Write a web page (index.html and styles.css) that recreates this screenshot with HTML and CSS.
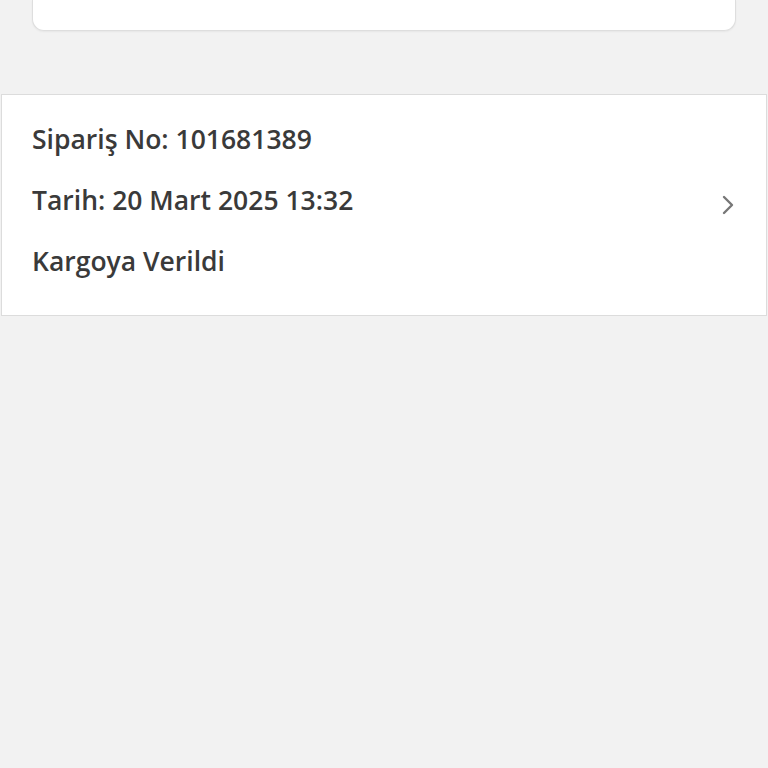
FILE: index.html
```html
<!DOCTYPE html>
<html lang="tr">
<head>
    <meta charset="UTF-8">
    <meta name="viewport" content="width=device-width, initial-scale=1.0">
    <title>Siparişlerim</title>
    <link rel="stylesheet" href="styles.css">
</head>
<body>

    <div class="top-card"></div>

    <div class="order">
        <div class="order-info">
            <div class="line">Sipariş No: 101681389</div>
            <div class="line">Tarih: 20 Mart 2025 13:32</div>
            <div class="line">Kargoya Verildi</div>
        </div>
        <svg class="chevron" width="14" height="20" viewBox="0 0 14 20">
            <path d="M3 2 L11 10 L3 18" fill="none" stroke="#777" stroke-width="2.4" stroke-linecap="round" stroke-linejoin="round"/>
        </svg>
    </div>

</body>
</html>
```

FILE: styles.css
```css
body {
    margin: 0;
    background-color: #f2f2f2;
    font-family: "Open Sans", Arial, sans-serif;
    color: #333;
    height: 100vh;
}

.top-card {
    height: 30px;
    margin: 0 32px;
    background: white;
    border: 1px solid #dedede;
    border-top: none;
    border-radius: 0 0 12px 12px;
    box-shadow: 0 1px 2px rgba(0, 0, 0, 0.05);
}

.order {
    display: flex;
    align-items: center;
    justify-content: space-between;
    margin: 63px 1px 0;
    padding: 14px 31px 23px 30px;
    background: white;
    border: 1px solid #dcdcdc;
}

.line {
    font-size: 26.5px;
    font-weight: 600;
    line-height: 61px;
    color: #3a3a3a;
}

.chevron {
    display: block;
    margin-top: 9px;
}
```
